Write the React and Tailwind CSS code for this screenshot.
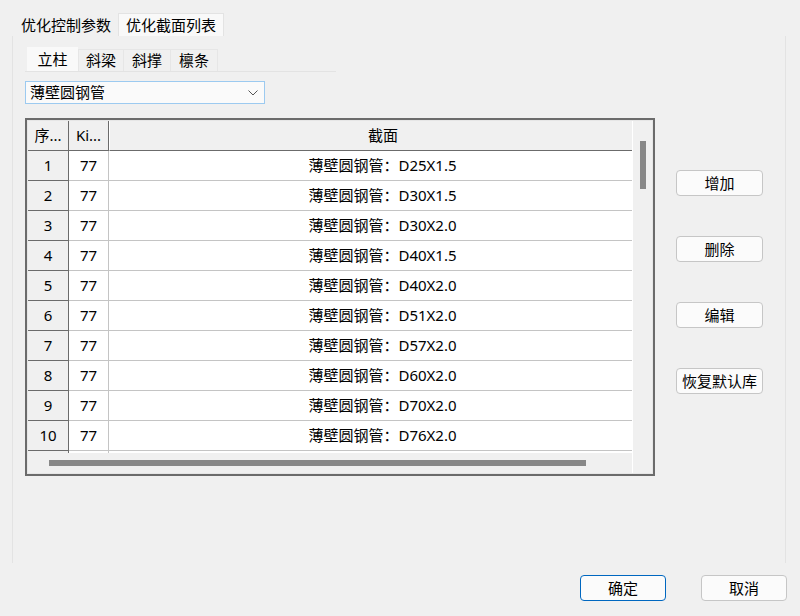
import React from 'react'

const rows = [
  'D25X1.5',
  'D30X1.5',
  'D30X2.0',
  'D40X1.5',
  'D40X2.0',
  'D51X2.0',
  'D57X2.0',
  'D60X2.0',
  'D70X2.0',
  'D76X2.0',
]

const SideButton = ({ children }) => (
  <button className="h-[26px] w-[87px] rounded-[4px] border border-[#c6c6c6] bg-[#fbfbfb] text-[15px] leading-none text-black">
    {children}
  </button>
)

const App = () => {
  return (
    <div
      className="flex h-[616px] w-[800px] flex-col bg-[#f0f0f0] text-[15px] text-black"
      style={{ fontFamily: '"Noto Sans", "Noto Sans CJK SC", sans-serif' }}
    >
      {/* outer tabs */}
      <div className="flex items-end pl-[14px] pt-[13px]">
        <div className="flex h-[21px] items-center px-[7px] leading-none">优化控制参数</div>
        <div className="flex h-[23px] items-center border-x border-t border-[#e3e3e3] bg-[#f9f9f9] px-[7px] leading-none">
          优化截面列表
        </div>
      </div>

      {/* tab pane */}
      <div className="ml-[12px] flex h-[527px] w-[774px] flex-col border-x border-[#e3e3e3] pl-[12px] pt-[11px]">
        {/* inner tabs */}
        <div className="flex w-[311px] items-end border-b border-[#e3e3e3]">
          <div className="ml-[2px] flex h-[24px] w-[51px] items-center justify-center bg-[#f9f9f9] leading-none">立柱</div>
          <div className="flex h-[22px] w-[46px] items-center justify-center border-x border-t border-[#e6e6e6] leading-none">斜梁</div>
          <div className="flex h-[22px] w-[47px] items-center justify-center border-r border-t border-[#e6e6e6] leading-none">斜撑</div>
          <div className="flex h-[22px] w-[47px] items-center justify-center border-r border-t border-[#e6e6e6] leading-none">檩条</div>
        </div>

        {/* combo */}
        <div className="mt-[9px] flex h-[23px] w-[240px] items-center justify-between border border-[#9ccaf0] bg-[#fafafa] pl-[4px] pr-[6px] leading-none">
          <span>薄壁圆钢管</span>
          <svg width="10" height="6" viewBox="0 0 10 6" fill="none" stroke="#555" strokeWidth="1">
            <path d="M0.5 0.5 L5 5 L9.5 0.5" />
          </svg>
        </div>

        <div className="mt-[14px] flex">
          {/* table */}
          <div className="h-[358px] w-[630px] border-2 border-[#6b6b6b]">
            <div className="flex h-full w-full border border-[#e6e6e6] bg-[#f0f0f0]">
              <div className="flex w-[604px] flex-col">
                <div className="h-[333px] overflow-hidden bg-white">
                  <div className="flex h-[30px] bg-[#f0f0f0]">
                    <div className="flex w-[41px] items-center justify-center border-b border-r border-[#6b6b6b] leading-none">序...</div>
                    <div className="flex w-[40px] items-center justify-center border-b border-r border-[#6b6b6b] leading-none">Ki...</div>
                    <div className="flex flex-1 items-center justify-center border-b border-l border-[#6b6b6b] border-l-white pl-[24px] leading-none">截面</div>
                  </div>
                  {rows.map((r, i) => (
                    <div key={i} className="flex h-[30px]">
                      <div className="flex w-[41px] items-center justify-center border-b border-r border-[#6b6b6b] bg-[#f0f0f0] leading-none">
                        {i + 1}
                      </div>
                      <div className="flex w-[40px] items-center justify-center border-b border-r border-[#c4c4c4] leading-none">77</div>
                      <div className="flex flex-1 items-center justify-center border-b border-[#c4c4c4] pl-[24px] leading-none">
                        薄壁圆钢管：{r}
                      </div>
                    </div>
                  ))}
                  <div className="flex h-[30px]">
                    <div className="w-[41px] border-r border-[#6b6b6b] bg-[#f0f0f0]" />
                    <div className="w-[40px] border-r border-[#c4c4c4]" />
                    <div className="flex-1" />
                  </div>
                </div>
                <div className="flex h-[20px] items-center pl-[21px]">
                  <div className="h-[6px] w-[537px] bg-[#888888]" />
                </div>
              </div>
              <div className="flex w-[20px] justify-center border-l border-white pt-[20px]">
                <div className="h-[48px] w-[6px] bg-[#888888]" />
              </div>
            </div>
          </div>

          {/* side buttons */}
          <div className="ml-[21px] flex flex-col gap-[40px] pt-[52px]">
            <SideButton>增加</SideButton>
            <SideButton>删除</SideButton>
            <SideButton>编辑</SideButton>
            <SideButton>恢复默认库</SideButton>
          </div>
        </div>
      </div>

      {/* footer */}
      <div className="mt-[12px] flex gap-[35px] pl-[580px]">
        <button className="h-[26px] w-[86px] rounded-[4px] border border-[#0067c0] bg-[#fbfbfb] text-[15px] leading-none">确定</button>
        <button className="h-[26px] w-[86px] rounded-[4px] border border-[#c6c6c6] bg-[#fbfbfb] text-[15px] leading-none">取消</button>
      </div>
    </div>
  )
}

export default App
